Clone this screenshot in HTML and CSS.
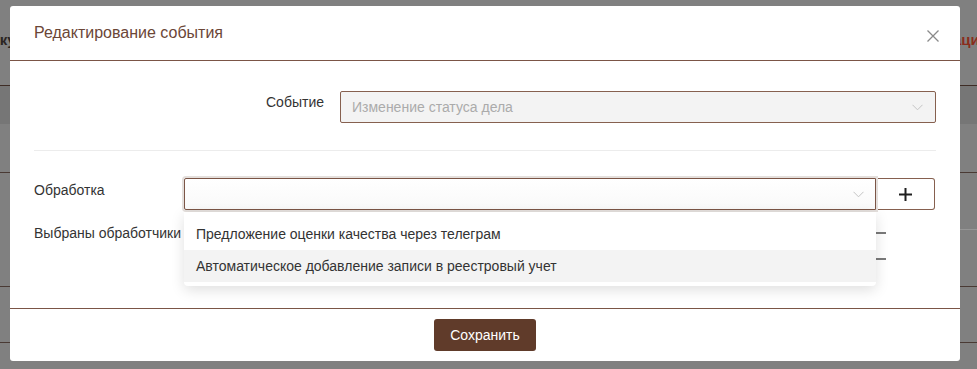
FILE: index.html
```html
<!DOCTYPE html>
<html lang="ru">
<head>
<meta charset="utf-8">
<title>Редактирование события</title>
<link rel="stylesheet" href="styles.css">
</head>
<body>
<div class="page">
  <div class="page-head">
    <span class="ph-left">Обработку</span>
    <span class="ph-right">ации</span>
  </div>
  <div class="page-filter"></div>
  <div class="page-row r1"></div>
  <div class="page-row r2"><div class="half"></div></div>
  <div class="page-row r3"></div>
</div>

<div class="modal">
  <div class="modal-header">
    <h2 class="modal-title">Редактирование события</h2>
    <button class="close" aria-label="Закрыть">
      <svg width="12" height="12" viewBox="0 0 12 12"><path d="M0.5 0.5 L11.5 11.5 M11.5 0.5 L0.5 11.5" stroke="#8a8a8a" stroke-width="1.3" fill="none"/></svg>
    </button>
  </div>
  <div class="modal-body">
    <div class="row-event">
      <label class="lbl-right">Событие</label>
      <div class="select disabled">
        <span class="placeholder">Изменение статуса дела</span>
        <svg class="chev" width="11" height="7" viewBox="0 0 11 7"><path d="M0.5 0.8 L5.5 5.8 L10.5 0.8" stroke="#c4c4c4" stroke-width="1" fill="none"/></svg>
      </div>
    </div>
    <div class="divider"></div>
    <div class="row-proc">
      <label class="lbl">Обработка</label>
      <div class="select-wrap">
        <div class="select active">
          <span class="placeholder"></span>
          <svg class="chev" width="11" height="7" viewBox="0 0 11 7"><path d="M0.5 0.8 L5.5 5.8 L10.5 0.8" stroke="#c4c4c4" stroke-width="1" fill="none"/></svg>
        </div>
        <ul class="dropdown">
          <li class="opt">Предложение оценки качества через телеграм</li>
          <li class="opt hover">Автоматическое добавление записи в реестровый учет</li>
        </ul>
      </div>
      <button class="plus" aria-label="Добавить">
        <svg width="13" height="13" viewBox="0 0 13 13"><path d="M6.5 0 V13 M0 6.5 H13" stroke="#1e1e1e" stroke-width="2" fill="none"/></svg>
      </button>
    </div>
    <div class="row-selected">
      <label class="lbl">Выбраны обработчики</label>
      <div class="handlers">
        <div class="handler"><span class="hname"></span><span class="dash"></span></div>
        <div class="handler"><span class="hname"></span><span class="dash"></span></div>
      </div>
    </div>
  </div>
  <div class="modal-footer">
    <button class="save">Сохранить</button>
  </div>
</div>
</body>
</html>
```
FILE: styles.css
```css
* { box-sizing: border-box; }
html, body { margin: 0; padding: 0; }
body {
  width: 977px;
  height: 369px;
  overflow: hidden;
  background: #808080;
  font-family: "Liberation Sans", Arial, sans-serif;
  font-size: 14px;
  color: #333;
  position: relative;
}

/* background page (dimmed) */
.page { width: 977px; }
.page-head {
  height: 86px;
  display: flex;
  justify-content: space-between;
  align-items: center;
  border-bottom: 1px solid #3e2c25;
  font-weight: bold;
  font-size: 15px;
  padding-bottom: 6px;
  white-space: nowrap;
}
.ph-left { margin-left: -64px; color: #2a2523; }
.ph-right { margin-right: -12px; color: #8a2c1c; }
.page-filter { height: 38px; background: #767676; }
.page-row { border-bottom: 1px solid #4a3a34; }
.r1 { height: 49px; }
.r2 { height: 114px; }
.r2 .half { height: 57px; border-bottom: 1px solid #969696; margin-left: 488px; }
.r3 { height: 56px; }

/* modal */
.modal {
  position: absolute;
  left: 10px;
  top: 6px;
  width: 950px;
  height: 355px;
  background: #fff;
  border-radius: 3px;
  display: flex;
  flex-direction: column;
}
.modal-header {
  height: 55px;
  border-bottom: 1px solid #7b5546;
  display: flex;
  align-items: center;
  justify-content: space-between;
  padding: 0 21px 0 24px;
}
.modal-title {
  margin: 0;
  font-size: 16px;
  font-weight: normal;
  color: #6b4637;
  margin-top: -1px;
}
.close {
  border: 0;
  background: none;
  padding: 0;
  width: 12px;
  height: 12px;
  margin-top: 5px;
  display: flex;
}

.modal-body {
  flex: 1;
  padding: 30px 24px 0;
}

.row-event {
  display: grid;
  grid-template-columns: 290px 596px;
  column-gap: 16px;
}
.lbl-right {
  text-align: right;
  padding-top: 3px;
  line-height: 16px;
}
.select {
  height: 32px;
  border: 1px solid #86604f;
  border-radius: 2px;
  display: flex;
  align-items: center;
  justify-content: space-between;
  padding: 0 12px 0 11px;
}
.select.disabled { background: #f3f3f3; }
.placeholder { color: #ababab; }
.chev { display: block; }
.select.disabled .chev { margin-top: 1px; }

.divider {
  height: 1px;
  background: #ececec;
  margin: 27px 0;
}

.row-proc {
  display: grid;
  grid-template-columns: 150px 692px 59px;
  height: 32px;
}
.lbl { line-height: 16px; padding-top: 4px; }
.select-wrap { position: relative; }
.select.active {
  background: linear-gradient(#fff, #f9f9f9);
  border-color: #7b5546;
  border-radius: 2px 0 0 2px;
  box-shadow: 0 0 0 2px #e4dfdc;
  padding-right: 11px;
}
.dropdown {
  position: absolute;
  left: 0;
  top: 34px;
  width: 692px;
  margin: 0;
  padding: 6px 0 4px;
  list-style: none;
  background: #fff;
  border-radius: 0 0 4px 4px;
  box-shadow: 0 4px 14px rgba(0, 0, 0, 0.13);
  z-index: 2;
}
.opt {
  height: 32px;
  line-height: 32px;
  padding: 0 12px;
  color: #333;
}
.opt.hover { background: #f3f3f3; }

.plus {
  height: 32px;
  border: 1px solid #86604f;
  border-left: 0;
  border-radius: 0 3px 3px 0;
  background: #fff;
  display: flex;
  align-items: center;
  justify-content: center;
  padding: 0;
}

.row-selected {
  display: grid;
  grid-template-columns: 150px 1fr;
  margin-top: 8px;
}
.row-selected .lbl { padding-top: 7px; }
.handlers { display: flex; flex-direction: column; }
.handler {
  height: 27px;
  display: grid;
  grid-template-columns: 692px 1fr;
  align-items: center;
}
.hname { padding-left: 12px; }
.dash {
  width: 10px;
  height: 2px;
  background: #7a7a7a;
}
.handler:first-child .dash { margin-top: 2px; }

.modal-footer {
  height: 53px;
  border-top: 1px solid #7b5546;
  display: flex;
  align-items: center;
  justify-content: center;
}
.save {
  height: 32px;
  padding: 0 16px;
  background: #603b2a;
  color: #fff;
  border: 0;
  border-radius: 3px;
  font-family: "Liberation Sans", Arial, sans-serif;
  font-size: 14px;
}
```
